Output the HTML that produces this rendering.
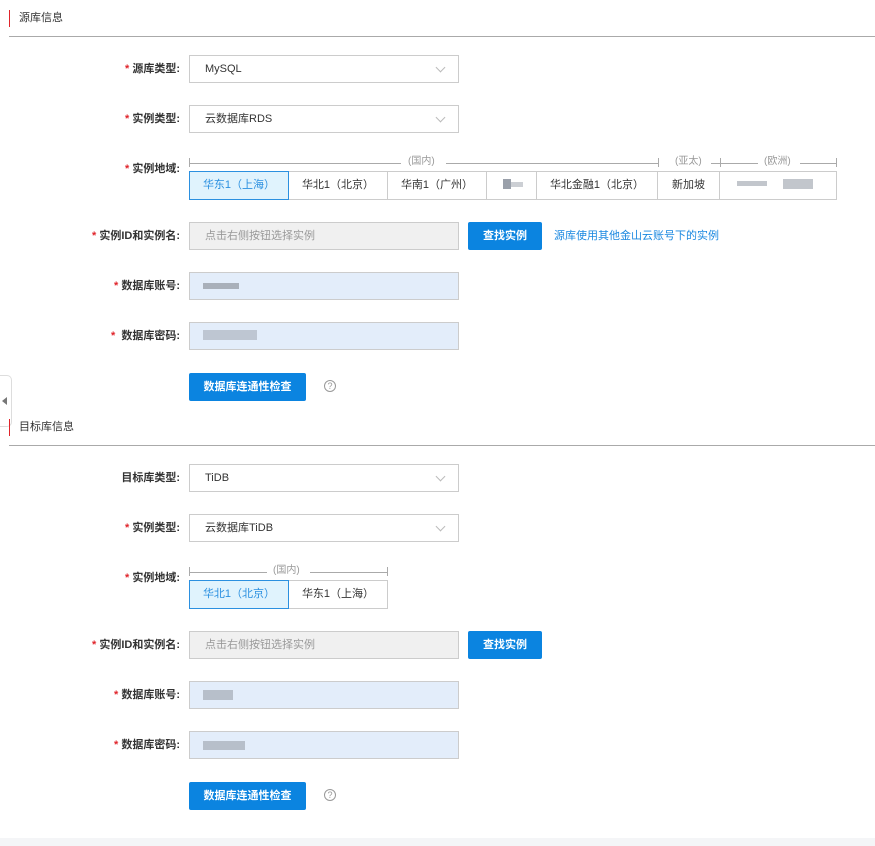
<!DOCTYPE html>
<html><head><meta charset="utf-8"><style>
*{box-sizing:border-box;margin:0;padding:0}
body{width:875px;height:846px;background:#fff;position:relative;overflow:hidden;font-family:"Liberation Sans","Noto Sans CJK SC",sans-serif;font-size:11px;color:#333}
.a{position:absolute}
.hd{position:absolute;left:9px;border-left:1.5px solid #e0242b;padding-left:9px;height:17px;line-height:17px;font-size:11px;color:#333}
.hl{position:absolute;left:9px;right:0;height:1px;background:#aaa}
.lb{position:absolute;right:695px;width:180px;text-align:right;font-size:11px;font-weight:bold;color:#333;height:28px;line-height:28px}
.lb i{color:#e0242b;font-style:normal;margin-right:3px}
.in{position:absolute;left:189px;width:270px;height:28px;border:1px solid #ccc;line-height:26px;padding-left:15px;font-size:11px;color:#333;background:#fff}
.in.dis{background:#f0f0f0;color:#999}
.in.bl{background:#e3edfa}
.ar{position:absolute;right:14px;top:8px;width:7px;height:7px;border-right:1px solid #bbb;border-bottom:1px solid #bbb;transform:rotate(45deg)}
.btn{position:absolute;background:#0b84e0;color:#fff;font-size:11px;font-weight:bold;text-align:center;height:28px;line-height:28px;border-radius:2px}
.seg{position:absolute;top:0;height:29px;border:1px solid #ccc;border-left:none;text-align:center;line-height:27px;font-size:11px;color:#333;background:#fff}
.seg.on{background:#e0f3fd;border:1px solid #2b90e0;color:#2b90e0}
.q{position:absolute;width:12px;height:12px;border:1px solid #999;border-radius:50%;font-size:9px;line-height:10px;text-align:center;color:#999}
.gl{position:absolute;height:1px;background:#aaa}
.tk{position:absolute;width:1px;height:9px;background:#aaa}
.gt{position:absolute;font-size:10px;color:#999;line-height:12px}
.px{position:absolute;background:#9aa0aa}
</style></head><body>

<div class="hd" style="top:10px">源库信息</div>
<div class="hl" style="top:36px"></div>

<div class="lb" style="top:55px"><i>*</i>源库类型:</div>
<div class="in" style="top:55px">MySQL<span class="ar"></span></div>
<div class="lb" style="top:105px"><i>*</i>实例类型:</div>
<div class="in" style="top:105px">云数据库RDS<span class="ar"></span></div>
<div class="lb" style="top:155px"><i>*</i>实例地域:</div>

<div class="tk" style="left:189px;top:158px"></div>
<div class="gl" style="left:189px;top:163px;width:212px"></div>
<div class="gt" style="left:408px;top:156px">(国内)</div>
<div class="gl" style="left:446px;top:163px;width:212px"></div>
<div class="tk" style="left:658px;top:158px"></div>
<div class="gt" style="left:675px;top:156px">(亚太)</div>
<div class="gl" style="left:711px;top:163px;width:9px"></div>
<div class="tk" style="left:720px;top:158px"></div>
<div class="gl" style="left:720px;top:163px;width:38px"></div>
<div class="gt" style="left:764px;top:156px">(欧洲)</div>
<div class="gl" style="left:800px;top:163px;width:36px"></div>
<div class="tk" style="left:836px;top:158px"></div>

<div class="a" style="left:189px;top:171px;width:648px;height:29px">
<div class="seg on" style="left:0;width:100px">华东1（上海）</div>
<div class="seg" style="left:100px;width:99px">华北1（北京）</div>
<div class="seg" style="left:199px;width:99px">华南1（广州）</div>
<div class="seg" style="left:298px;width:50px"></div>
<div class="seg" style="left:348px;width:121px">华北金融1（北京）</div>
<div class="seg" style="left:469px;width:62px">新加坡</div>
<div class="seg" style="left:531px;width:117px"></div>
</div>
<div class="px" style="left:503px;top:179px;width:8px;height:10px"></div>
<div class="px" style="left:511px;top:182px;width:12px;height:5px;opacity:.5"></div>
<div class="px" style="left:737px;top:181px;width:30px;height:5px;opacity:.6"></div>
<div class="px" style="left:783px;top:179px;width:30px;height:10px;opacity:.6"></div>

<div class="lb" style="top:222px"><i>*</i>实例ID和实例名:</div>
<div class="in dis" style="top:222px">点击右侧按钮选择实例</div>
<div class="btn" style="left:468px;top:222px;width:74px">查找实例</div>
<div class="a" style="left:554px;top:222px;line-height:28px;color:#1a88e0;font-size:11px">源库使用其他金山云账号下的实例</div>

<div class="lb" style="top:272px"><i>*</i>数据库账号:</div>
<div class="in bl" style="top:272px"></div>
<div class="px" style="left:203px;top:283px;width:36px;height:6px;opacity:.8"></div>
<div class="lb" style="top:322px"><i>*</i>&nbsp;数据库密码:</div>
<div class="in bl" style="top:322px"></div>
<div class="px" style="left:203px;top:330px;width:54px;height:10px;opacity:.5"></div>

<div class="btn" style="left:189px;top:373px;width:117px">数据库连通性检查</div>
<div class="q" style="left:324px;top:380px">?</div>

<div class="a" style="left:0;top:375px;width:12px;height:52px;border:1px solid #ddd;border-left:none;border-radius:0 5px 5px 0;background:#fff"></div>
<div class="a" style="left:2px;top:397px;width:0;height:0;border-top:4px solid transparent;border-bottom:4px solid transparent;border-right:5px solid #777"></div>

<div class="hd" style="top:419px;border-left-color:#e0242b">目标库信息</div>
<div class="hl" style="top:445px"></div>

<div class="lb" style="top:464px">目标库类型:</div>
<div class="in" style="top:464px">TiDB<span class="ar"></span></div>
<div class="lb" style="top:514px"><i>*</i>实例类型:</div>
<div class="in" style="top:514px">云数据库TiDB<span class="ar"></span></div>
<div class="lb" style="top:564px"><i>*</i>实例地域:</div>

<div class="tk" style="left:189px;top:567px"></div>
<div class="gl" style="left:189px;top:572px;width:78px"></div>
<div class="gt" style="left:273px;top:565px">(国内)</div>
<div class="gl" style="left:310px;top:572px;width:77px"></div>
<div class="tk" style="left:387px;top:567px"></div>
<div class="a" style="left:189px;top:580px;width:199px;height:29px">
<div class="seg on" style="left:0;width:100px">华北1（北京）</div>
<div class="seg" style="left:100px;width:99px">华东1（上海）</div>
</div>

<div class="lb" style="top:631px"><i>*</i>实例ID和实例名:</div>
<div class="in dis" style="top:631px">点击右侧按钮选择实例</div>
<div class="btn" style="left:468px;top:631px;width:74px">查找实例</div>

<div class="lb" style="top:681px"><i>*</i>数据库账号:</div>
<div class="in bl" style="top:681px"></div>
<div class="px" style="left:203px;top:690px;width:30px;height:10px;opacity:.6"></div>
<div class="lb" style="top:731px"><i>*</i>数据库密码:</div>
<div class="in bl" style="top:731px"></div>
<div class="px" style="left:203px;top:741px;width:42px;height:9px;opacity:.6"></div>

<div class="btn" style="left:189px;top:782px;width:117px">数据库连通性检查</div>
<div class="q" style="left:324px;top:789px">?</div>

<div class="a" style="left:0;top:838px;width:875px;height:8px;background:#f4f5f7"></div>
</body></html>
